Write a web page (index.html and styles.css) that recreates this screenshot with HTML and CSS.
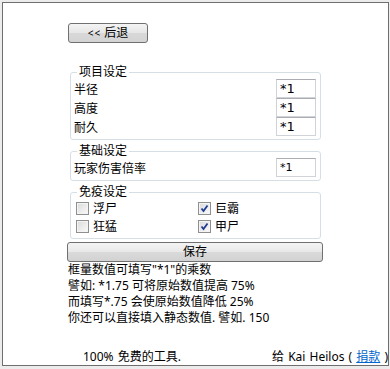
FILE: index.html
```html
<!DOCTYPE html>
<html lang="zh-CN">
<head>
    <meta charset="UTF-8">
    <meta name="viewport" content="width=device-width, initial-scale=1.0">
    <title>设定</title>
    <link rel="stylesheet" href="styles.css">
</head>
<body>
    <div class="window">
        <div class="content">
            <button class="back-btn" type="button"><span class="arrows">&lt;&lt;</span> 后退</button>

            <fieldset class="group first">
                <legend>项目设定</legend>
                <div class="row">
                    <span>半径</span>
                    <input type="text" class="value" value="*1">
                </div>
                <div class="row">
                    <span>高度</span>
                    <input type="text" class="value" value="*1">
                </div>
                <div class="row">
                    <span>耐久</span>
                    <input type="text" class="value" value="*1">
                </div>
            </fieldset>

            <fieldset class="group">
                <legend>基础设定</legend>
                <div class="row">
                    <span>玩家伤害倍率</span>
                    <input type="text" class="value small" value="*1">
                </div>
            </fieldset>

            <fieldset class="group">
                <legend>免疫设定</legend>
                <div class="checks">
                    <label class="check"><span class="box"></span>浮尸</label>
                    <label class="check"><span class="box checked"><svg viewBox="0 0 13 13" width="13" height="13"><path d="M3.5 6.5 L5.5 9 L9.5 3.5" fill="none" stroke="#1f3a93" stroke-width="1.8"/></svg></span>巨霸</label>
                    <label class="check"><span class="box"></span>狂猛</label>
                    <label class="check"><span class="box checked"><svg viewBox="0 0 13 13" width="13" height="13"><path d="M3.5 6.5 L5.5 9 L9.5 3.5" fill="none" stroke="#1f3a93" stroke-width="1.8"/></svg></span>甲尸</label>
                </div>
            </fieldset>

            <button class="save-btn" type="button">保存</button>

            <div class="notes">
                <p>框量数值可填写"*1"的乘数</p>
                <p>譬如: *1.75 可将原始数值提高 75%</p>
                <p>而填写*.75 会使原始数值降低 25%</p>
                <p>你还可以直接填入静态数值. 譬如. 150</p>
            </div>
        </div>

        <div class="footer">
            <span>100% 免费的工具.</span>
            <span>给 Kai Heilos ( <a href="#">捐款</a> )</span>
        </div>
    </div>
</body>
</html>
```

FILE: styles.css
```css
html, body {
    margin: 0;
    padding: 0;
}
body {
    background-color: #ececec;
    font-family: "Noto Sans", "Noto Sans CJK SC", sans-serif;
    font-size: 12px;
    color: #000;
    height: 369px;
}
.window {
    margin: 2px 0 0 2px;
    width: 385px;
    height: 362px;
    background-color: #fff;
    border: 1px solid #6e6e6e;
    display: flex;
    flex-direction: column;
}
.content {
    width: 256px;
    margin-left: 64px;
    padding-top: 20px;
}
.back-btn {
    display: block;
    width: 80px;
    height: 20px;
    margin-left: 1px;
    padding: 0;
    border: 1px solid #707070;
    border-radius: 3px;
    background: linear-gradient(#f4f4f4, #e6e6e6 50%, #d8d8d8 51%, #d4d4d4);
    font-family: inherit;
    font-size: 12px;
    line-height: 18px;
    color: #000;
}
.back-btn .arrows {
    font-size: 10px;
    letter-spacing: 1px;
}
.group {
    margin: 4px 2px 0 3px;
    padding: 0 4px 3px 3px;
    border: 1px solid #d5dfe5;
    border-radius: 3px;
}
.group.first {
    margin-top: 22px;
}
.group legend {
    padding: 0 2px;
    margin-left: 3px;
    line-height: 14px;
}
.row {
    display: flex;
    justify-content: space-between;
    align-items: center;
    height: 19px;
}
.value {
    box-sizing: border-box;
    width: 40px;
    height: 19px;
    margin: 0;
    padding: 0 3px;
    border: 1px solid #d0d4d8;
    border-top-color: #abadb3;
    font-family: "DejaVu Sans", sans-serif;
    font-size: 13px;
    color: #000;
}
.value.small {
    font-size: 11px;
}
.checks {
    display: grid;
    grid-template-columns: 122px 1fr;
    padding-left: 2px;
}
.check {
    display: flex;
    align-items: center;
    height: 18px;
}
.box {
    box-sizing: border-box;
    width: 13px;
    height: 13px;
    margin-right: 4px;
    border: 1px solid #8e8f8f;
    box-shadow: inset 0 0 0 1px #f4f4f4;
    background: linear-gradient(135deg, #dadada, #fafafa);
    display: flex;
    align-items: center;
    justify-content: center;
}
.box svg {
    display: block;
    margin: -1px;
}
.save-btn {
    display: block;
    width: 256px;
    height: 20px;
    margin-top: 3px;
    padding: 0;
    border: 1px solid #707070;
    border-radius: 3px;
    background: linear-gradient(#f4f4f4, #e8e8e8 50%, #dadada 51%, #d2d2d2);
    font-family: inherit;
    font-size: 12px;
    line-height: 18px;
    color: #000;
}
.notes {
    margin-left: 1px;
}
.notes p {
    margin: 0;
    line-height: 16px;
}
.footer {
    margin-top: auto;
    display: flex;
    justify-content: space-between;
    padding: 0 0 1px 80px;
    line-height: 14px;
    word-spacing: 1px;
}
.footer a {
    color: #0066cc;
}
```
